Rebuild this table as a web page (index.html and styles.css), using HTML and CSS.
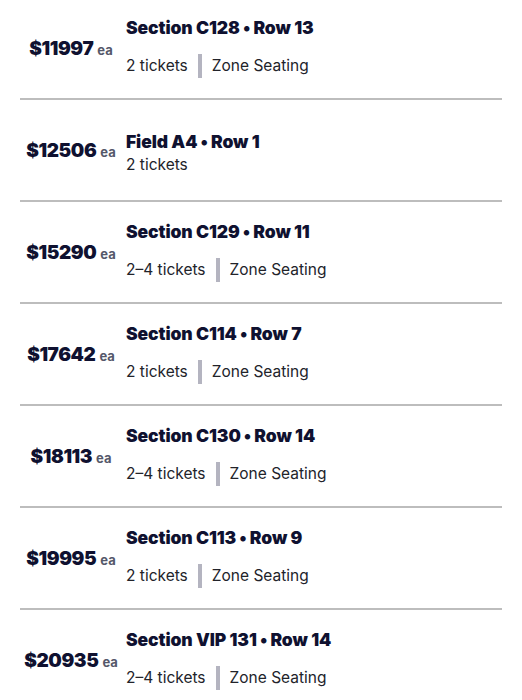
FILE: index.html
```html
<!DOCTYPE html>
<html>
<head>
<meta charset="utf-8">
<link rel="stylesheet" href="styles.css">
</head>
<body>
<ul class="list">
  <li class="row">
    <div class="price"><span class="amt">$11997</span><span class="ea">ea</span></div>
    <div class="details">
      <div class="title">Section C128 • Row 13</div>
      <div class="sub zone"><span>2 tickets</span><span class="bar"></span><span>Zone Seating</span></div>
    </div>
  </li>
  <li class="row">
    <div class="price"><span class="amt">$12506</span><span class="ea">ea</span></div>
    <div class="details plain">
      <div class="title">Field A4 • Row 1</div>
      <div class="sub"><span>2 tickets</span></div>
    </div>
  </li>
  <li class="row">
    <div class="price"><span class="amt">$15290</span><span class="ea">ea</span></div>
    <div class="details">
      <div class="title">Section C129 • Row 11</div>
      <div class="sub zone"><span>2–4 tickets</span><span class="bar"></span><span>Zone Seating</span></div>
    </div>
  </li>
  <li class="row">
    <div class="price"><span class="amt">$17642</span><span class="ea">ea</span></div>
    <div class="details">
      <div class="title">Section C114 • Row 7</div>
      <div class="sub zone"><span>2 tickets</span><span class="bar"></span><span>Zone Seating</span></div>
    </div>
  </li>
  <li class="row">
    <div class="price"><span class="amt">$18113</span><span class="ea">ea</span></div>
    <div class="details">
      <div class="title">Section C130 • Row 14</div>
      <div class="sub zone"><span>2–4 tickets</span><span class="bar"></span><span>Zone Seating</span></div>
    </div>
  </li>
  <li class="row">
    <div class="price"><span class="amt">$19995</span><span class="ea">ea</span></div>
    <div class="details">
      <div class="title">Section C113 • Row 9</div>
      <div class="sub zone"><span>2 tickets</span><span class="bar"></span><span>Zone Seating</span></div>
    </div>
  </li>
  <li class="row">
    <div class="price"><span class="amt">$20935</span><span class="ea">ea</span></div>
    <div class="details">
      <div class="title">Section VIP 131 • Row 14</div>
      <div class="sub zone"><span>2–4 tickets</span><span class="bar"></span><span>Zone Seating</span></div>
    </div>
  </li>
</ul>
</body>
</html>
```

FILE: styles.css
```css
html, body {
  margin: 0;
  padding: 0;
  background: #ffffff;
}
body {
  font-family: "Inter", "Noto Sans", sans-serif;
  color: #1c1c24;
  overflow: hidden;
}
.list {
  list-style: none;
  margin: -2px 20px 0 20px;
  padding: 0;
}
.row {
  display: flex;
  align-items: center;
  height: 100px;
  border-bottom: 2px solid #bdbdbd;
}
.price {
  width: 102px;
  flex: none;
  display: flex;
  justify-content: center;
  align-items: baseline;
  gap: 4px;
  margin-right: 4px;
}
.amt {
  font-size: 19px;
  font-weight: 900;
  color: #0f1130;
  letter-spacing: -0.4px;
}
.ea {
  font-size: 13px;
  font-weight: 700;
  color: #55586a;
}
.details {
  display: flex;
  flex-direction: column;
}
.details.plain {
  margin-top: 5px;
}
.title {
  font-size: 17.5px;
  line-height: 24px;
  font-weight: 900;
  color: #0f1130;
  letter-spacing: -0.1px;
}
.sub {
  font-size: 15.5px;
  line-height: 22px;
  color: #22232a;
  display: flex;
  align-items: center;
}
.sub.zone {
  margin-top: 12px;
  height: 28px;
}
.bar {
  width: 4px;
  height: 24px;
  background: #b4b4c0;
  margin: 0 10px 0 10px;
}
```
